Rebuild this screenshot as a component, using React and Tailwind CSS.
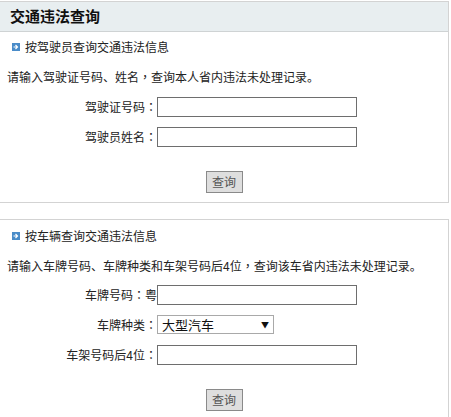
import React from 'react'

const Arrow = () => (
	<svg width="8" height="8" viewBox="0 0 8 8" className="shrink-0">
		<rect width="8" height="8" fill="#4a8cc9" />
		<path d="M1.5 4h3.5M3.5 2l2 2-2 2" stroke="#fff" strokeWidth="1.2" fill="none" />
	</svg>
)

// centred full-width punctuation, as in the original page
const P = ({ children }) => <span style={{ fontFamily: '"Noto Sans CJK TC", sans-serif' }}>{children}</span>

const Row = ({ label, children, className = '' }) => (
	<div className={'flex items-center ' + className}>
		<label className="w-[157px] text-right text-[12px] text-[#222] leading-none">{label}</label>
		{children}
	</div>
)

const Input = () => (
	<input type="text" className="w-[200px] h-[20px] border border-[#6e6e6e] bg-white outline-none px-1 text-[12px]" />
)

const Button = ({ className = '' }) => (
	<div className={'flex justify-center ' + className}>
		<button className="w-[37px] h-[22px] border border-[#8a8a8a] bg-[#dedede] text-[12px] text-[#555] leading-none">
			查询
		</button>
	</div>
)

const App = () => {
	return (
		<div className="w-[451px] h-[417px] overflow-hidden bg-white" style={{ fontFamily: '"Noto Sans CJK SC", "Noto Sans", sans-serif' }}>
			{/* driver panel */}
			<div className="mt-px w-[449px] border-t border-r border-b border-[#d3d3d3]">
				<div className="h-[30px] bg-[#e8eef0] border-b border-[#cfd3d4] flex items-center pl-[10px] text-[15px] font-bold text-[#111]">
					交通违法查询
				</div>
				<div className="h-[30px] flex items-center gap-[5px] pl-[12px] text-[12px] text-[#222]">
					<Arrow />
					<span>按驾驶员查询交通违法信息</span>
				</div>
				<div className="h-[30px] flex items-center pl-[7px] text-[12px] text-[#222]">
					<span>
						请输入驾驶证号码、姓名<P>，</P>查询本人省内违法未处理记录。
					</span>
				</div>
				<Row label={<>驾驶证号码<P>：</P></>} className="mt-[5px]">
					<Input />
				</Row>
				<Row label={<>驾驶员姓名<P>：</P></>} className="mt-[10px]">
					<Input />
				</Row>
				<Button className="mt-[24px] mb-[9px]" />
			</div>

			{/* vehicle panel */}
			<div className="mt-[16px] w-[449px] border-t border-r border-[#d3d3d3] pb-[10px]">
				<div className="h-[32px] flex items-center gap-[5px] pl-[12px] text-[12px] text-[#222]">
					<Arrow />
					<span>按车辆查询交通违法信息</span>
				</div>
				<div className="h-[28px] flex items-center pl-[7px] text-[12px] text-[#222]">
					<span>
						请输入车牌号码、车牌种类和车架号码后4位<P>，</P>查询该车省内违法未处理记录。
					</span>
				</div>
				<Row label={<>车牌号码<P>：</P>粤</>} className="mt-[5px]">
					<Input />
				</Row>
				<Row label={<>车牌种类<P>：</P></>} className="mt-[10px]">
					<div className="w-[117px] h-[19px] border border-[#a9a9a9] bg-white flex items-center justify-between pl-[4px] pr-[4px]">
						<span className="text-[13px] text-[#111] leading-none">大型汽车</span>
						<span className="text-[8px] text-[#111] leading-none">▼</span>
					</div>
				</Row>
				<Row label={<>车架号码后4位<P>：</P></>} className="mt-[11px]">
					<Input />
				</Row>
				<Button className="mt-[24px]" />
			</div>
		</div>
	)
}

export default App
